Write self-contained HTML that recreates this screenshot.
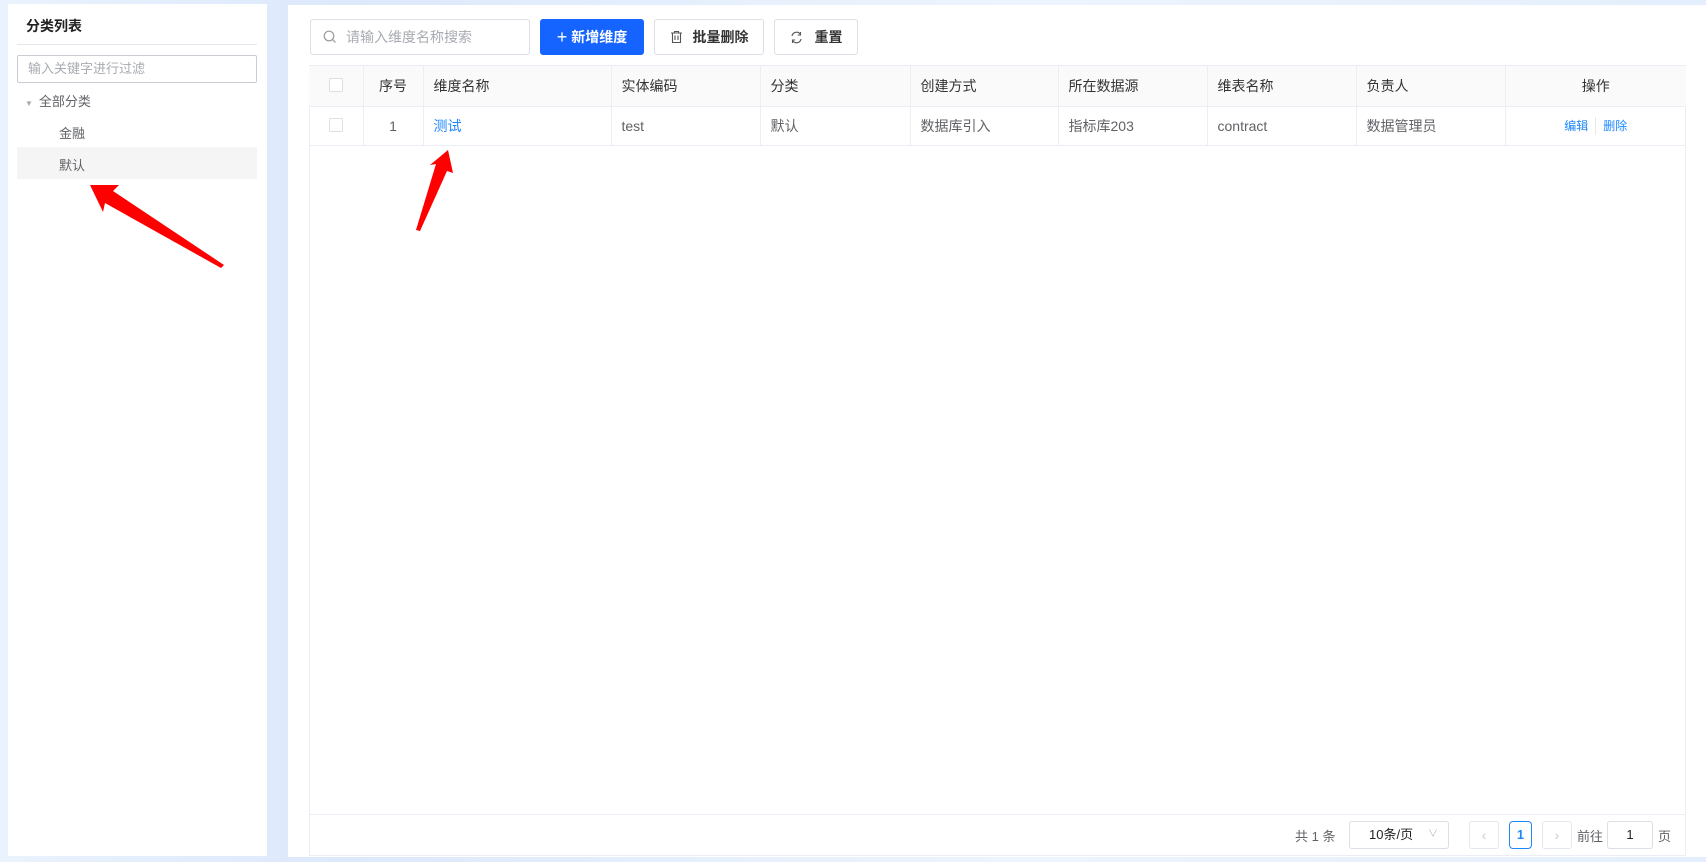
<!DOCTYPE html>
<html><head><meta charset="utf-8"><style>
*{box-sizing:border-box;margin:0;padding:0}
body{width:1706px;height:862px;overflow:hidden;background:linear-gradient(90deg,#eaf2fd,#dce9fb 20%,#eef4fd 60%,#e4eefc);font-family:"Liberation Sans","Noto Sans CJK SC",sans-serif;font-size:14px;color:#606266;position:relative}
.abs{position:absolute}
.left{left:8px;top:4px;width:259px;height:852px;background:#fff}
.main{left:288px;top:5px;width:1418px;height:852px;background:#fff}
.btn{position:absolute;top:19px;height:36px;border:1px solid #dcdfe6;border-radius:3px;background:#fff;display:flex;align-items:center;justify-content:center;color:#333;font-size:14px}
table{border-collapse:collapse;table-layout:fixed}
td{border-right:1px solid #ebeef5;border-bottom:1px solid #ebeef5;padding-left:10px;white-space:nowrap}
.cb{display:inline-block;width:14px;height:14px;border:1px solid #dcdfe6;border-radius:2px;background:#fff}
</style></head><body>
<div class="abs left"></div>
<div class="abs" style="left:26px;top:16px;font-weight:bold;color:#222;font-size:14px">分类列表</div>
<div class="abs" style="left:17px;top:44px;width:240px;height:1px;background:#e4e7ed"></div>
<div class="abs" style="left:17px;top:55px;width:240px;height:28px;border:1px solid #c9ccd3;border-radius:2px;padding-left:10px;line-height:26px;color:#a8abb2;font-size:13px">输入关键字进行过滤</div>
<div class="abs" style="left:25px;top:91px;font-size:13px;color:#606266"><span style="font-size:8px;color:#aaa;margin-right:6px">▼</span>全部分类</div>
<div class="abs" style="left:59px;top:123px;font-size:13px">金融</div>
<div class="abs" style="left:17px;top:147px;width:240px;height:32px;background:#f5f5f5"></div>
<div class="abs" style="left:59px;top:155px;font-size:13px">默认</div>

<div class="abs main"></div>
<div class="btn" style="left:310px;width:220px;justify-content:flex-start;padding-left:12px;color:#a8abb2">
<svg width="14" height="14" viewBox="0 0 14 14" style="margin-right:9px"><circle cx="6" cy="6" r="4.8" fill="none" stroke="#999" stroke-width="1.2"/><path d="M9.5 9.5L12.5 12.5" stroke="#999" stroke-width="1.2"/></svg>请输入维度名称搜索</div>
<div class="btn" style="left:540px;width:104px;background:#1664ff;border-color:#1664ff;color:#fff;font-weight:bold"><span style="font-weight:normal;font-size:18px;margin-right:4px">+</span>新增维度</div>
<div class="btn" style="left:654px;width:110px;font-weight:bold">
<svg width="13" height="14" viewBox="0 0 13 14" style="margin-right:10px"><path d="M1 3H12M4.5 3V1.5H8.5V3M2.5 3V12.5H10.5V3M5 5.5V10M8 5.5V10" fill="none" stroke="#555" stroke-width="1.1"/></svg>批量删除</div>
<div class="btn" style="left:774px;width:84px;font-weight:bold">
<svg width="13" height="13" viewBox="0 0 13 13" style="margin-right:12px"><path d="M2 5A4.6 4.6 0 0 1 10.5 3.5M11 8A4.6 4.6 0 0 1 2.5 9.5" fill="none" stroke="#555" stroke-width="1.1"/><path d="M10.5 1V4H7.8M2.5 12V9H5.2" fill="none" stroke="#555" stroke-width="1.1"/></svg>重置</div>

<div class="abs" style="left:309px;top:65px;width:1377px;height:791px;border:1px solid #ebeef5;border-top:none"></div>
<table class="abs" style="left:309px;top:65px;width:1377px">
<colgroup><col style="width:54px"><col style="width:60px"><col style="width:188px"><col style="width:149px"><col style="width:150px"><col style="width:148px"><col style="width:149px"><col style="width:149px"><col style="width:149px"><col style="width:181px"></colgroup>
<tr style="height:41px;background:#fafafa;color:#333;border-top:1px solid #ebeef5">
<td style="text-align:center;padding:0"><span class="cb"></span></td><td style="text-align:center;padding:0">序号</td><td>维度名称</td><td>实体编码</td><td>分类</td><td>创建方式</td><td>所在数据源</td><td>维表名称</td><td>负责人</td><td style="text-align:center;padding:0;border-right:none">操作</td></tr>
<tr style="height:39px">
<td style="text-align:center;padding:0"><span class="cb"></span></td><td style="text-align:center;padding:0">1</td><td style="color:#1e88ff">测试</td><td>test</td><td>默认</td><td>数据库引入</td><td>指标库203</td><td>contract</td><td>数据管理员</td><td style="text-align:center;padding:0;border-right:none;font-size:12px;color:#1e88ff">编辑<span style="display:inline-block;width:1px;height:18px;background:#e4e7ed;vertical-align:middle;margin:0 7px"></span>删除</td></tr>
</table>
<div class="abs" style="left:310px;top:814px;width:1375px;height:1px;background:#ebeef5"></div>
<div class="abs" style="left:1295px;top:826px;font-size:13px">共 1 条</div>
<div class="abs" style="left:1349px;top:821px;width:100px;height:28px;border:1px solid #dcdfe6;border-radius:3px;line-height:26px;padding-left:19px;color:#222;font-size:13px">10条/页<span style="position:absolute;right:10px;top:0;color:#bbb;font-size:10px">∨</span></div>
<div class="abs" style="left:1469px;top:821px;width:30px;height:28px;border:1px solid #e4e7ed;border-radius:3px;text-align:center;line-height:26px;color:#ccc">‹</div>
<div class="abs" style="left:1509px;top:821px;width:23px;height:28px;border:1px solid #1e88ff;border-radius:4px;text-align:center;line-height:26px;color:#1e88ff;font-weight:bold;font-size:13px">1</div>
<div class="abs" style="left:1542px;top:821px;width:30px;height:28px;border:1px solid #e4e7ed;border-radius:3px;text-align:center;line-height:26px;color:#ccc">›</div>
<div class="abs" style="left:1577px;top:826px;font-size:13px">前往</div>
<div class="abs" style="left:1607px;top:821px;width:46px;height:28px;border:1px solid #dcdfe6;border-radius:3px;text-align:center;line-height:26px;color:#222;font-size:13px">1</div>
<div class="abs" style="left:1658px;top:826px;font-size:13px">页</div>

<svg class="abs" style="left:0;top:0" width="1706" height="862">
<path d="M90 185L119 185L113 191L224 265L221 268L105 203L103 212Z" fill="#ff0000"/>
<path d="M448 150L453 173L447 171L420 231L416 230L436 164L430 165Z" fill="#ff0000"/>
</svg>
</body></html>
